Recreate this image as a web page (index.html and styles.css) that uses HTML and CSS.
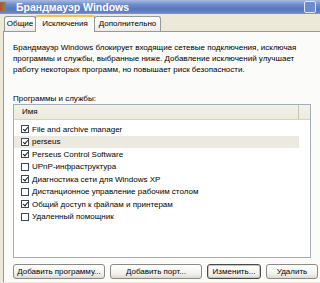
FILE: index.html
```html
<!DOCTYPE html>
<html>
<head>
<meta charset="utf-8">
<link rel="stylesheet" href="styles.css">
</head>
<body>
<div class="window">
  <div class="titlebar">
    <span class="appicon"></span>
    <span class="title">Брандмауэр Windows</span>
    <span class="helpbtn"></span>
  </div>
  <div class="client">
    <div class="tabs">
      <div class="tab t1">Общие</div>
      <div class="tab t2 active">Исключения</div>
      <div class="tab t3">Дополнительно</div>
    </div>
    <div class="panel">
      <p class="intro">Брандмауэр Windows блокирует входящие сетевые подключения, исключая<br>программы и службы, выбранные ниже. Добавление исключений улучшает<br>работу некоторых программ, но повышает риск безопасности.</p>
      <div class="label">Программы и службы:</div>
      <div class="list">
        <div class="header"><span class="col">Имя</span><span class="rest"></span></div>
        <div class="rows">
          <div class="row"><span class="cb on"></span>File and archive manager</div>
          <div class="row sel"><span class="cb on"></span>perseus</div>
          <div class="row"><span class="cb on"></span>Perseus Control Software</div>
          <div class="row"><span class="cb"></span>UPnP-инфраструктура</div>
          <div class="row"><span class="cb on"></span>Диагностика сети для Windows XP</div>
          <div class="row"><span class="cb"></span>Дистанционное управление рабочим столом</div>
          <div class="row"><span class="cb on"></span>Общий доступ к файлам и принтерам</div>
          <div class="row"><span class="cb"></span>Удаленный помощник</div>
        </div>
      </div>
      <div class="buttons">
        <button class="btn b1">Добавить программу...</button>
        <button class="btn b2">Добавить порт...</button>
        <button class="btn b3 focus">Изменить...</button>
        <button class="btn b4">Удалить</button>
      </div>
    </div>
  </div>
</div>
</body>
</html>
```
FILE: styles.css
```css
html, body {
  margin: 0;
  padding: 0;
  background: #ECE9D8;
}
body {
  width: 320px;
  height: 283px;
  overflow: hidden;
  font-family: "Liberation Sans", "DejaVu Sans", sans-serif;
  font-size: 8px;
  color: #000;
}
.window {
  width: 330px;
}
.titlebar {
  height: 13px;
  background: linear-gradient(#a9bbe2, #6f8cca 35%, #5676bf 70%, #6a86c6);
  border-bottom: 1px solid #7f92b8;
  display: flex;
  align-items: center;
  position: relative;
}
.appicon {
  width: 6px;
  height: 9px;
  background: linear-gradient(90deg, #c8442c, #5aa04a);
  border-radius: 1px;
}
.title {
  margin-left: 10px;
  color: #fff;
  font-weight: bold;
  font-size: 10.5px;
}
.helpbtn {
  position: absolute;
  right: 14px;
  top: 1px;
  width: 10px;
  height: 10px;
  border: 1px solid #dfe6f4;
  border-radius: 2px;
  background: #6e8bd0;
}
.client {
  padding-left: 3px;
}
.tabs {
  display: flex;
  align-items: flex-end;
  height: 17px;
  padding-left: 1px;
}
.tab {
  height: 14px;
  line-height: 14px;
  text-align: center;
  border: 1px solid #919B9C;
  border-bottom: none;
  border-radius: 3px 3px 0 0;
  background: linear-gradient(#ffffff, #ecebe5);
  margin-right: -1px;
  box-sizing: content-box;
}
.t1 { width: 30px; }
.t2 { width: 58px; }
.t3 { width: 65px; }
.tab.active {
  background: #fbfbf9;
  border-top: 2px solid #f3c15c;
  height: 15px;
  line-height: 14px;
  position: relative;
  z-index: 1;
  margin-bottom: -1px;
}
.panel {
  border: 1px solid #919B9C;
  border-right: none;
  border-bottom: none;
  background: #fbfbf9;
  height: 251px;
  padding: 10px 0 0 9px;
  box-sizing: border-box;
}
.intro {
  margin: 0;
  white-space: nowrap;
  line-height: 11px;
}
.label {
  margin-top: 18px;
  line-height: 11px;
}
.list {
  width: 296px;
  height: 152px;
  border: 1px solid #a5acb5;
  background: #fff;
}
.header {
  display: flex;
  height: 14px;
  background: linear-gradient(#f3f2ec, #ebeadb);
  border-bottom: 1px solid #d6d2c2;
}
.header .col {
  width: 285px;
  line-height: 14px;
  padding-left: 8px;
  box-sizing: border-box;
  border-right: 1px solid #c7c5b2;
}
.rows {
  padding-top: 3px;
}
.row {
  display: flex;
  align-items: center;
  height: 12.5px;
  width: 285px;
  padding-left: 7px;
  box-sizing: border-box;
  white-space: nowrap;
}
.row.sel {
  background: #ebe9e0;
}
.cb {
  width: 6px;
  height: 6px;
  border: 1px solid #3b4a5a;
  background: #fff;
  margin-right: 3px;
  position: relative;
  flex: none;
}
.cb.on::after {
  content: "";
  position: absolute;
  left: 1.5px;
  top: 0px;
  width: 2px;
  height: 4px;
  border: solid #1a1a1a;
  border-width: 0 1.3px 1.3px 0;
  transform: rotate(40deg);
}
.buttons {
  display: flex;
  gap: 5px;
  margin-top: 6px;
}
.btn {
  font-family: inherit;
  font-size: 8px;
  color: #000;
  height: 15px;
  padding: 0;
  border: 1px solid #8a8a86;
  border-radius: 3px;
  background: linear-gradient(#ffffff, #f1f0ea 70%, #dcdad0);
  line-height: 12px;
}
.b1 { width: 92px; }
.b2 { width: 92px; }
.b3 { width: 54px; }
.b4 { width: 52px; }
.btn.focus {
  border-color: #4a4a48;
  box-shadow: inset 0 0 0 1px #c9c7bd;
}
```
